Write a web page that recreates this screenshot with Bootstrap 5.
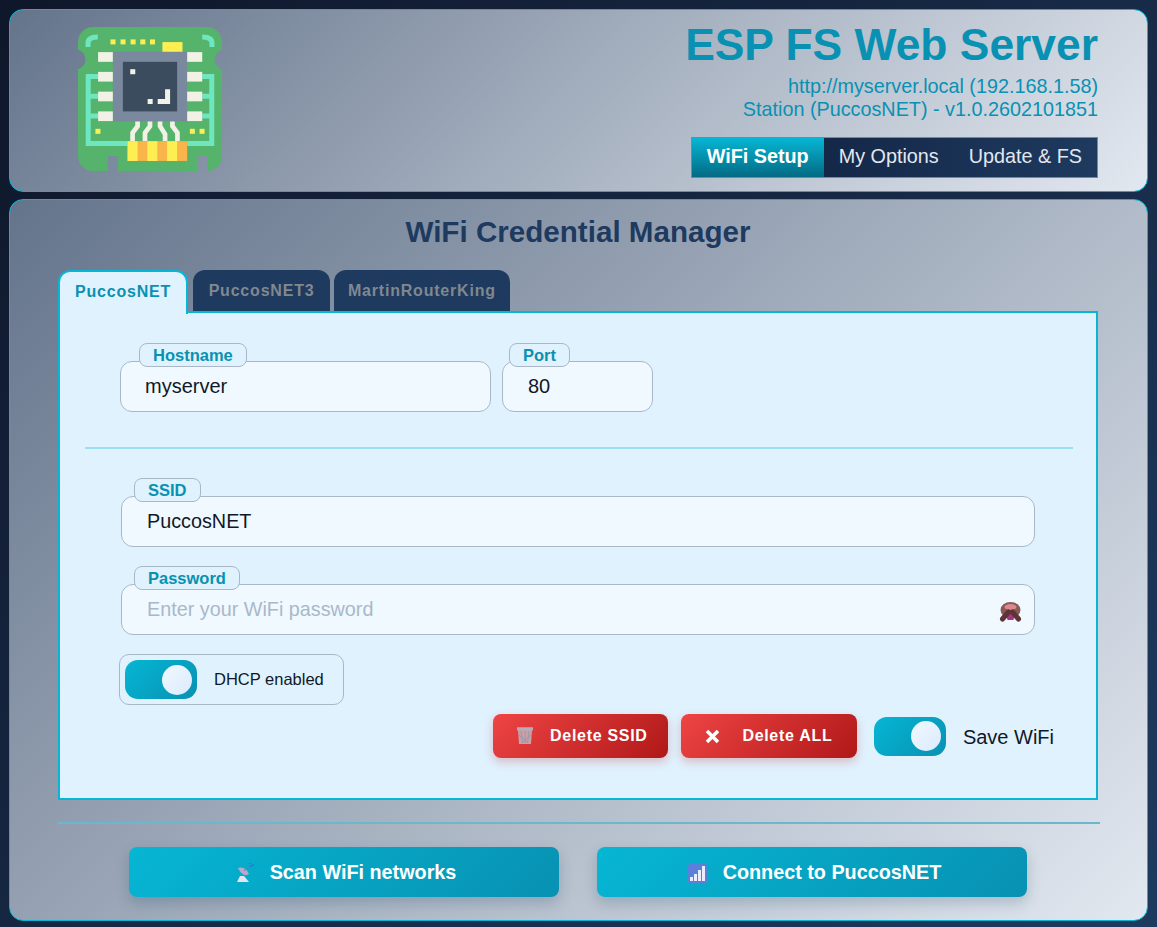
<!DOCTYPE html>
<html lang="en">
<head>
  <meta charset="UTF-8" />
  <meta name="viewport" content="width=device-width, initial-scale=1.0" />
  <title>ESP FS Web Server</title>
  <link href="https://cdn.jsdelivr.net/npm/bootstrap@5.3.1/dist/css/bootstrap.min.css" rel="stylesheet" />
  <style>
    html, body { height: 927px; overflow: hidden; }
    body {
      font-family: "Liberation Sans", Arial, sans-serif;
      background: linear-gradient(135deg, #0f172a, #1e3a5f);
      padding: 9px 9px 7px;
      color: #111827;
    }
    .panel-card {
      background: linear-gradient(135deg, #64748b, #e2e8f0);
      border: 1px solid #06b6d4;
      border-radius: 14px;
    }
    .top-card { height: 183px; margin-bottom: 7px; padding: 17px 49px 0 68px; }
    .main-card { height: 722px; padding: 0 49px 0 48px; }
    .logo { width: 144px; height: 144px; }
    .app-title { font-size: 44.4px; font-weight: 700; line-height: 1; color: #0891b2; margin: -4px 0 8px; }
    .app-sub { font-size: 19.8px; line-height: 23px; color: #0891b2; margin-bottom: 15.5px; }
    .top-nav { border: 1px solid #06b6d4; background: linear-gradient(90deg, #0f1f3d, #1e3a5f); height: 41px; vertical-align: top; }
    .top-nav a { font-size: 19.8px; color: #e2e8f0; padding: 0 15px; line-height: 37px; text-decoration: none; }
    .top-nav a.active { font-weight: 700; color: #fff; background: linear-gradient(180deg, #06b6d4, #036a84); }
    .page-title { font-size: 29.6px; font-weight: 700; color: #1e3a5f; text-align: center; line-height: 34px; margin: 15px 0 21px; }
    .wifi-tabs { border: 0; gap: 4px; position: relative; z-index: 1; }
    .wifi-tabs .nav-link {
      font-size: 16px; font-weight: 700; letter-spacing: .8px; color: #808890;
      background: #1e3a5f; border: 0; border-radius: 12px 12px 0 0; height: 41px; padding: 0 15.5px; line-height: 41px;
    }
    .wifi-tabs .nav-item:last-child .nav-link { padding: 0 14px; }
    .wifi-tabs .nav-link.active {
      color: #0891b2; background: #e0f2fe; border: 2px solid #06b6d4; border-bottom: 0;
      height: 44px; line-height: 39px; padding: 0 15px; margin-right: 1px;
    }
    .tab-body { background: #e0f2fe; border: 2px solid #06b6d4; height: 489px; margin-top: -2px; padding: 48px 60px 0 60px; }
    .field { position: relative; }
    .field .form-control {
      height: 51px; font-size: 20px; color: #111827; background: #f0f9ff; border: 1px solid #a9b8c9;
      border-radius: 12px; padding: 0 24px; box-shadow: none;
    }
    .field .form-control::placeholder { color: #a9b8c9; }
    .field-tag {
      position: absolute; top: -18px; left: 13px; height: 24px; padding: 0 13px; line-height: 22px;
      font-size: 16.5px; font-weight: 700; color: #0891b2; background: #e0f2fe;
      border: 1px solid #a9b8c9; border-radius: 8px; z-index: 1;
    }
    .host-field { width: 371px; }
    .host-field .field-tag { left: 19px; }
    .port-field { width: 151px; margin-left: 11px; }
    .port-field .field-tag { left: 7px; }
    .port-field .form-control { padding: 0 25px; }
    .divider { height: 2px; background: #9ddff2; margin: 35px -37px 47px -35px; }
    .ssid-fields { width: 914px; margin-left: 1px; gap: 37px; }
    .ssid-fields .form-control { font-size: 19.8px; padding: 0 25px; }
    .eye { position: absolute; right: 13px; top: 18px; width: 23px; height: 20px; }
    .toggle {
      display: block; position: relative; width: 72px; height: 39px; border-radius: 13px;
      background: linear-gradient(135deg, #06b6d4, #0891b2); flex: none;
    }
    .toggle::after {
      content: ""; position: absolute; right: 5px; top: 4.5px; width: 30px; height: 30px; border-radius: 50%;
      background: linear-gradient(135deg, #f0f9ff, #dbeafe);
    }
    .dhcp-box {
      width: 225px; height: 51px; padding: 5px; gap: 17px; margin: 19px 0 9px -1px;
      border: 1px solid #a9b8c9; border-radius: 10px; font-size: 16.5px;
    }
    .save-label { font-size: 20px; margin: 2px -18px 0 17px; }
    .btn-del {
      height: 44px; font-size: 16px; font-weight: 700; letter-spacing: .7px; color: #fff; border: 0; border-radius: 8px;
      background: linear-gradient(135deg, #ef4444, #b01818); box-shadow: 0 4px 10px rgba(185, 28, 28, .25); padding: 0;
    }
    .btn-del:hover, .btn-go:hover { color: #fff; }
    .btn-ssid { width: 175px; margin-right: 13px; padding-left: 3px; }
    .btn-all { width: 176px; margin-right: 17px; }
    .btn-all svg { margin-right: 6px; }
    .rule { height: 2px; background: #6bb7cc; margin: 22px -2px 23px 0; }
    .go-row { gap: 38px; }
    .btn-go {
      width: 430px; height: 50px; font-size: 19.8px; font-weight: 700; color: #fff; border: 0; border-radius: 8px;
      background: linear-gradient(135deg, #06b6d4, #0891b2); box-shadow: 0 6px 14px rgba(15, 60, 90, .22); padding: 2px 0 0 5px;
    }
  </style>
</head>
<body>
<header class="panel-card top-card d-flex justify-content-between">
  <svg class="logo" viewBox="235 82 430 430" aria-hidden="true">
    <path fill="#55b36b" d="M280 82H620A45 45 0 0 1 665 127V150A30 30 0 0 0 665 208V467A45 45 0 0 1 621 512V467H591V512H354V467H324V512H280A45 45 0 0 1 235 467V208A30 30 0 0 0 235 150V127A45 45 0 0 1 280 82Z"/>
    <g fill="none" stroke="#6ee7c0" stroke-width="15">
      <path d="M265 142V130Q265 112 294 112"/>
      <path d="M635 142V130Q635 112 606 112"/>
      <path d="M295 230H265.500V430H383M265 289H295M265 348H295"/>
      <path d="M606 230H634.500V430H561M635 289H606M635 348H606"/>
    </g>
    <g fill="#fdee52">
      <rect x="332" y="119" width="15" height="15"/><rect x="362" y="119" width="15" height="15"/>
      <rect x="392" y="119" width="15" height="15"/><rect x="421" y="119" width="15" height="15"/>
      <rect x="450" y="119" width="15" height="15"/><rect x="487" y="127" width="60" height="30"/>
      <rect x="287" y="386" width="15" height="15"/><rect x="569" y="386" width="15" height="15"/>
      <rect x="598" y="386" width="15" height="15"/>
    </g>
    <rect x="339" y="156" width="222" height="208" fill="#7a899d"/>
    <rect x="369" y="186" width="162" height="148" fill="#3a4c5e"/>
    <g fill="#f2f1e6">
      <rect x="295" y="157" width="44" height="29"/><rect x="295" y="216" width="44" height="29"/>
      <rect x="295" y="275" width="44" height="29"/><rect x="295" y="334" width="44" height="29"/>
      <rect x="561" y="157" width="45" height="29"/><rect x="561" y="216" width="45" height="29"/>
      <rect x="561" y="275" width="45" height="29"/><rect x="561" y="334" width="45" height="29"/>
      <rect x="391" y="208" width="15" height="15"/><rect x="443" y="297" width="15" height="15"/>
      <path d="M473 297H495V268H510V312H473Z"/>
    </g>
    <g fill="none" stroke="#f2f1e6" stroke-width="14">
      <path d="M413 364V378L398 398V423"/><path d="M450 364V378L435 398V423"/>
      <path d="M480 364V378L495 402V423"/><path d="M517 364V378L532 398V423"/>
    </g>
    <rect x="383" y="423" width="178" height="59" fill="#f9b44a"/>
    <g fill="#fdee52"><rect x="383" y="423" width="30" height="59"/><rect x="442" y="423" width="30" height="59"/><rect x="501" y="423" width="30" height="59"/></g>
  </svg>
  <div class="text-end">
    <h1 class="app-title">ESP FS Web Server</h1>
    <div class="app-sub">http://myserver.local (192.168.1.58)<br />Station (PuccosNET) - v1.0.2602101851</div>
    <nav class="top-nav d-inline-flex">
      <a class="active" href="#">WiFi Setup</a>
      <a href="#">My Options</a>
      <a href="#">Update &amp; FS</a>
    </nav>
  </div>
</header>

<main class="panel-card main-card">
  <h2 class="page-title">WiFi Credential Manager</h2>
  <ul class="nav nav-tabs wifi-tabs">
    <li class="nav-item"><a class="nav-link active" href="#">PuccosNET</a></li>
    <li class="nav-item"><a class="nav-link" href="#">PuccosNET3</a></li>
    <li class="nav-item"><a class="nav-link" href="#">MartinRouterKing</a></li>
  </ul>
  <div class="tab-body">
    <div class="d-flex">
      <div class="field host-field">
        <span class="field-tag">Hostname</span>
        <input type="text" class="form-control" value="myserver" />
      </div>
      <div class="field port-field">
        <span class="field-tag">Port</span>
        <input type="text" class="form-control" value="80" />
      </div>
    </div>
    <div class="divider"></div>
    <div class="ssid-fields d-flex flex-column">
      <div class="field">
        <span class="field-tag">SSID</span>
        <input type="text" class="form-control" value="PuccosNET" />
      </div>
      <div class="field">
        <span class="field-tag">Password</span>
        <input type="password" class="form-control" placeholder="Enter your WiFi password" />
        <svg class="eye" viewBox="0 0 23 20" aria-hidden="true">
          <ellipse cx="11.500" cy="8" rx="10" ry="8" fill="#8a5a55"/>
          <ellipse cx="11.500" cy="5" rx="6" ry="3" fill="#d98b90"/>
          <path d="M7 11H16L14.500 18H8.500Z" fill="#a03a80"/>
          <path d="M3.500 17L9.500 10M19.500 17L13.500 10" stroke="#5f3338" stroke-width="5" stroke-linecap="round"/>
        </svg>
      </div>
    </div>
    <div class="dhcp-box d-flex align-items-center">
      <span class="toggle"></span>
      <span>DHCP enabled</span>
    </div>
    <div class="d-flex justify-content-end align-items-center">
      <button type="button" class="btn btn-del btn-ssid d-flex align-items-center justify-content-center gap-3">
        <svg width="18" height="18" viewBox="0 0 18 18" aria-hidden="true">
          <path d="M1 1H17V3.500H16L15 17H3L2 3.500H1Z" fill="#c9a0a8"/>
          <path d="M1 1.500H17" stroke="#b0b0bc" stroke-width="2.500"/>
          <path d="M5 4L6.500 16M9 4V16M13 4L11.500 16M3 8L12 16M15 8L6 16" stroke="#9a9aa8" stroke-width="1"/>
        </svg>
        <span>Delete SSID</span>
      </button>
      <button type="button" class="btn btn-del btn-all d-flex align-items-center justify-content-center gap-3">
        <svg width="15" height="15" viewBox="0 0 15 15" aria-hidden="true">
          <path d="M2 2L13 13M13 2L2 13" stroke="#fff" stroke-width="3.500"/>
        </svg>
        <span>Delete ALL</span>
      </button>
      <span class="toggle"></span>
      <span class="save-label">Save WiFi</span>
    </div>
  </div>
  <div class="rule"></div>
  <div class="d-flex justify-content-center go-row">
    <button type="button" class="btn btn-go d-flex align-items-center justify-content-center gap-3">
      <svg width="17" height="20" viewBox="2 1 17 20" aria-hidden="true">
        <path d="M3 6Q10 4 14 12Q8 16 3 6Z" fill="#b9a9c9"/>
        <path d="M2 20L5 14L9 14L14 20Z" fill="#e4e4f2"/>
        <path d="M9 9L14 3" stroke="#6c7fb0" stroke-width="1"/>
        <path d="M14 1H17M17 3H19M15 4H17" stroke="#2a6bd8" stroke-width="1.500" stroke-dasharray="1.500 1"/>
      </svg>
      <span>Scan WiFi networks</span>
    </button>
    <button type="button" class="btn btn-go d-flex align-items-center justify-content-center gap-3">
      <svg width="19" height="19" viewBox="0 0 19 19" aria-hidden="true">
        <rect width="19" height="19" rx="2" fill="#5b80dc"/>
        <path d="M2 13h3v4H2zM6 10h3v7H6zM10 6h3v11h-3zM14 2h3v15h-3z" fill="#e8eefb"/>
      </svg>
      <span>Connect to PuccosNET</span>
    </button>
  </div>
</main>
<script src="https://cdn.jsdelivr.net/npm/bootstrap@5.3.1/dist/js/bootstrap.bundle.min.js"></script>
</body>
</html>
